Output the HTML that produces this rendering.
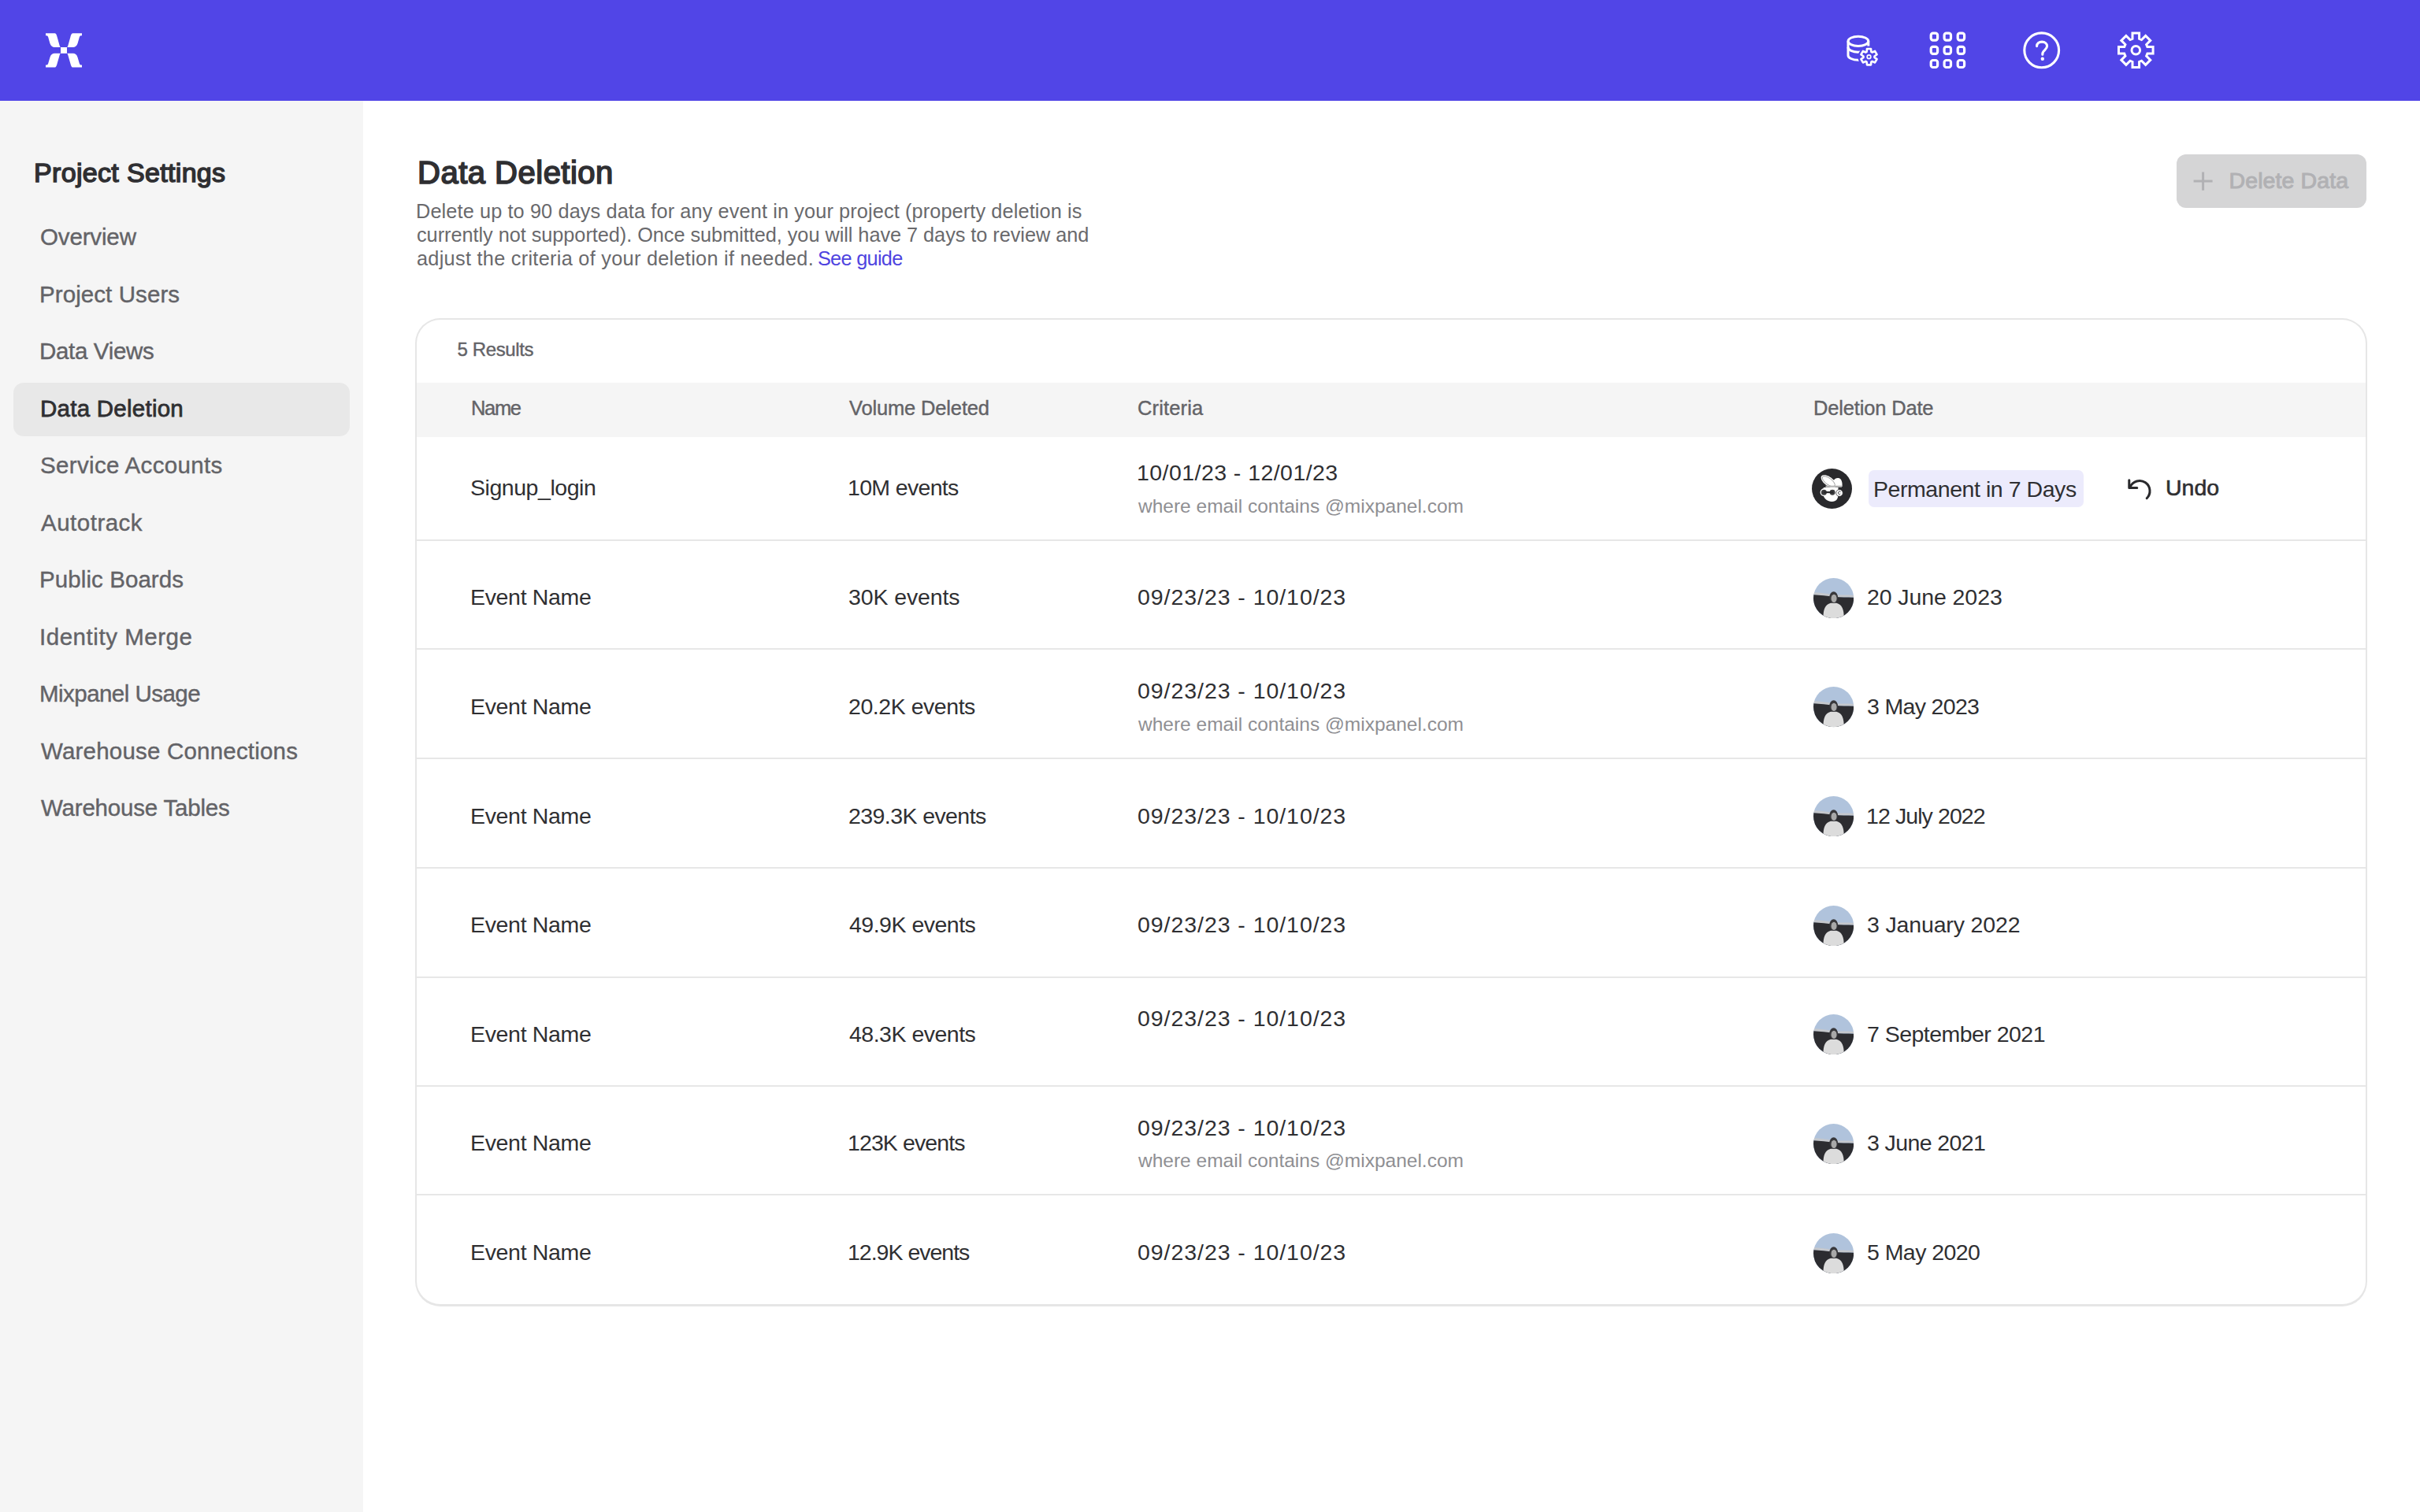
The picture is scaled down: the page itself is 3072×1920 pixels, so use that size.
<!DOCTYPE html>
<html><head><meta charset="utf-8"><title>Data Deletion</title>
<style>
html,body{margin:0;padding:0;}
body{width:3072px;height:1920px;overflow:hidden;position:relative;background:#fff;font-family:"Liberation Sans", sans-serif;}
.t{position:absolute;white-space:nowrap;}
.abs{position:absolute;}
</style></head><body>
<div class="abs" style="left:0;top:0;width:3072px;height:128px;background:#5145e7"></div>
<svg style="position:absolute;left:0;top:0" width="160" height="128" viewBox="0 0 160 128">
<g transform="translate(81,63.9)" fill="#fff">
<path d="M -23,-21.6 L -11.4,-21.6 C -9.6,-21.6 -8.9,-18.5 -8.4,-16.8 L -5.6,-7 C -5.1,-5.2 -4.6,-3.9 -4,-3.9 L -11.8,-3.9 C -14.2,-3.9 -16.6,-5.6 -17.6,-9 L -19.8,-16.6 C -20.3,-18.2 -21,-18.6 -22,-18.6 L -23,-18.6 Z"/><path d="M -23,-21.6 L -11.4,-21.6 C -9.6,-21.6 -8.9,-18.5 -8.4,-16.8 L -5.6,-7 C -5.1,-5.2 -4.6,-3.9 -4,-3.9 L -11.8,-3.9 C -14.2,-3.9 -16.6,-5.6 -17.6,-9 L -19.8,-16.6 C -20.3,-18.2 -21,-18.6 -22,-18.6 L -23,-18.6 Z" transform="scale(-1,1)"/><path d="M -23,-21.6 L -11.4,-21.6 C -9.6,-21.6 -8.9,-18.5 -8.4,-16.8 L -5.6,-7 C -5.1,-5.2 -4.6,-3.9 -4,-3.9 L -11.8,-3.9 C -14.2,-3.9 -16.6,-5.6 -17.6,-9 L -19.8,-16.6 C -20.3,-18.2 -21,-18.6 -22,-18.6 L -23,-18.6 Z" transform="scale(1,-1)"/><path d="M -23,-21.6 L -11.4,-21.6 C -9.6,-21.6 -8.9,-18.5 -8.4,-16.8 L -5.6,-7 C -5.1,-5.2 -4.6,-3.9 -4,-3.9 L -11.8,-3.9 C -14.2,-3.9 -16.6,-5.6 -17.6,-9 L -19.8,-16.6 C -20.3,-18.2 -21,-18.6 -22,-18.6 L -23,-18.6 Z" transform="scale(-1,-1)"/>
<rect x="-4" y="-3.9" width="8" height="7.8"/>
</g></svg>
<svg style="position:absolute;left:2300px;top:0" width="500" height="128" viewBox="2300 0 500 128">
<g fill="none" stroke="#fff" stroke-width="3">
<ellipse cx="2358.9" cy="52.3" rx="12.9" ry="6.1"/>
<path d="M2346,52.3 V70.2 A12.9,6.1 0 0 0 2371.8,70.2 V52.3"/>
<path d="M2346,60.1 A12.9,6.1 0 0 0 2371.8,60.1"/>
</g>
<path d="M2369.60,65.80 L2370.00,62.00 L2375.00,62.00 L2375.40,65.80 L2376.59,66.49 L2380.08,64.93 L2382.58,69.27 L2379.49,71.51 L2379.49,72.89 L2382.58,75.13 L2380.08,79.47 L2376.59,77.91 L2375.40,78.60 L2375.00,82.40 L2370.00,82.40 L2369.60,78.60 L2368.41,77.91 L2364.92,79.47 L2362.42,75.13 L2365.51,72.89 L2365.51,71.51 L2362.42,69.27 L2364.92,64.93 L2368.41,66.49 Z" fill="#5145e7" stroke="#5145e7" stroke-width="7" stroke-linejoin="round"/>
<path d="M2369.60,65.80 L2370.00,62.00 L2375.00,62.00 L2375.40,65.80 L2376.59,66.49 L2380.08,64.93 L2382.58,69.27 L2379.49,71.51 L2379.49,72.89 L2382.58,75.13 L2380.08,79.47 L2376.59,77.91 L2375.40,78.60 L2375.00,82.40 L2370.00,82.40 L2369.60,78.60 L2368.41,77.91 L2364.92,79.47 L2362.42,75.13 L2365.51,72.89 L2365.51,71.51 L2362.42,69.27 L2364.92,64.93 L2368.41,66.49 Z" fill="#5145e7" stroke="#fff" stroke-width="2.6" stroke-linejoin="round"/>
<circle cx="2372.5" cy="72.2" r="2.3" fill="none" stroke="#fff" stroke-width="1.7"/>
<g fill="none" stroke="#fff" stroke-width="3.2">
<rect x="2451.2" y="42.2" width="8.4" height="9" rx="2.6"/>
<rect x="2451.2" y="59.4" width="8.4" height="9" rx="2.6"/>
<rect x="2451.2" y="76.5" width="8.4" height="9" rx="2.6"/>
<rect x="2468.1" y="42.2" width="8.4" height="9" rx="2.6"/>
<rect x="2468.1" y="59.4" width="8.4" height="9" rx="2.6"/>
<rect x="2468.1" y="76.5" width="8.4" height="9" rx="2.6"/>
<rect x="2485.2" y="42.2" width="8.4" height="9" rx="2.6"/>
<rect x="2485.2" y="59.4" width="8.4" height="9" rx="2.6"/>
<rect x="2485.2" y="76.5" width="8.4" height="9" rx="2.6"/>
</g>
<circle cx="2591.7" cy="63.8" r="21.9" fill="none" stroke="#fff" stroke-width="3.1"/>
<path d="M2585.6,58.6 C2585.6,55 2588.5,53.1 2592.1,53.1 C2595.8,53.1 2598.6,55.3 2598.6,58.6 C2598.6,61.8 2595.6,63.2 2593.9,65.4 C2593.0,66.5 2592.8,67.8 2592.8,69.2" fill="none" stroke="#fff" stroke-width="3.1" stroke-linecap="round"/>
<circle cx="2592.8" cy="74.8" r="2.2" fill="#fff"/>
<path d="M2707.00,49.20 L2707.00,42.00 L2715.60,42.00 L2715.60,49.20 L2718.58,50.44 L2723.67,45.34 L2729.76,51.43 L2724.66,56.52 L2725.90,59.50 L2733.10,59.50 L2733.10,68.10 L2725.90,68.10 L2724.66,71.08 L2729.76,76.17 L2723.67,82.26 L2718.58,77.16 L2715.60,78.40 L2715.60,85.60 L2707.00,85.60 L2707.00,78.40 L2704.02,77.16 L2698.93,82.26 L2692.84,76.17 L2697.94,71.08 L2696.70,68.10 L2689.50,68.10 L2689.50,59.50 L2696.70,59.50 L2697.94,56.52 L2692.84,51.43 L2698.93,45.34 L2704.02,50.44 Z" fill="none" stroke="#fff" stroke-width="3" stroke-linejoin="miter"/>
<circle cx="2711.3" cy="63.8" r="5.3" fill="none" stroke="#fff" stroke-width="3"/>
</svg>
<div class="abs" style="left:0;top:128px;width:461px;height:1792px;background:#f5f5f5"></div>
<div class="abs" style="left:17px;top:486px;width:427px;height:68px;border-radius:13px;background:#e8e8e8"></div>
<div class="abs" style="left:2763px;top:196px;width:241px;height:68px;border-radius:12px;background:#d5d5d6"></div>
<svg class="abs" style="left:2780px;top:214px" width="32" height="32" viewBox="2780 214 32 32"><path d="M2796.6,218.4 V241.7 M2784.6,230 H2808.6" stroke="#b1b1b4" stroke-width="3"/></svg>
<div class="abs" style="left:527px;top:404px;width:2478px;height:1255px;box-sizing:border-box;border:2px solid #e6e6e6;border-bottom-width:3px;border-radius:32px;background:#fff"></div>
<div class="abs" style="left:529px;top:486px;width:2474px;height:68.5px;background:#f5f5f5"></div>
<div class="abs" style="left:529px;top:684.5px;width:2474px;height:2px;background:#e7e7e7"></div>
<div class="abs" style="left:529px;top:823.3px;width:2474px;height:2px;background:#e7e7e7"></div>
<div class="abs" style="left:529px;top:962.0px;width:2474px;height:2px;background:#e7e7e7"></div>
<div class="abs" style="left:529px;top:1100.6px;width:2474px;height:2px;background:#e7e7e7"></div>
<div class="abs" style="left:529px;top:1239.5px;width:2474px;height:2px;background:#e7e7e7"></div>
<div class="abs" style="left:529px;top:1378.0px;width:2474px;height:2px;background:#e7e7e7"></div>
<div class="abs" style="left:529px;top:1516.3px;width:2474px;height:2px;background:#e7e7e7"></div>
<div class="abs" style="left:2372.4px;top:597px;width:272.4px;height:46.6px;border-radius:7px;background:#ecebfc"></div>
<svg style="position:absolute;left:2299.90px;top:595.00px" width="51.0" height="51.0" viewBox="0 0 51 51">
<circle cx="25.5" cy="25.5" r="25.5" fill="#29292c"/>
<path d="M26.5,23 C25.5,16 29,11.5 33.5,12 C37.5,12.5 39,17 38.5,23 Z" fill="#fff"/>
<ellipse cx="21.3" cy="16.3" rx="11.3" ry="5.6" transform="rotate(37 21.3 16.3)" fill="#fff"/>
<ellipse cx="21.3" cy="16.3" rx="9.6" ry="4" transform="rotate(37 21.3 16.3)" fill="none" stroke="#9a9a9a" stroke-width="0.9"/>
<rect x="17.5" y="21.6" width="20.5" height="2.2" fill="#b8b8b8"/>
<path d="M13.5,28 C13.5,37 19,42 25.5,42 C31,42 33.5,38 33.5,33 L33.5,24 L15,24 Z" fill="#fff"/>
<circle cx="15.4" cy="30.2" r="4.2" fill="#3c3c3e" stroke="#fff" stroke-width="1.3"/>
<circle cx="26.1" cy="30.2" r="4.1" fill="#3c3c3e" stroke="#fff" stroke-width="1.3"/>
<rect x="15" y="29" width="12" height="2.2" fill="#29292c"/>
<circle cx="35" cy="31" r="4.3" fill="#fff" stroke="#29292c" stroke-width="0.7"/>
<path d="M36.5,29.5 C35,28.5 33.3,29.5 33.5,31.2 C33.7,32.8 35.5,33.2 36.3,32" fill="none" stroke="#29292c" stroke-width="0.9"/>
</svg>
<svg style="position:absolute;left:2301.80px;top:733.70px" width="51.2" height="51.2" viewBox="0 0 70 70">
<defs><clipPath id="ac0"><circle cx="35" cy="35" r="35"/></clipPath></defs>
<g clip-path="url(#ac0)">
<rect width="70" height="70" fill="#b0c3dc"/>
<path d="M0,25 C12,25 22,27 35,29 C48,30 58,29 70,30 L70,33 C58,33 45,33 35,33 C22,32 10,30 0,29 Z" fill="#c4c7cc"/>
<path d="M0,29 C12,29.5 24,31 35,32.5 C48,33.5 58,33.5 70,34 L70,70 L0,70 Z" fill="#2c2c30"/>
<path d="M17,70 C17,55 20,46 30,43.5 L40,43.5 C50,46 53,55 53,70 Z" fill="#dcdcdc"/>
<ellipse cx="35.1" cy="33.5" rx="7.4" ry="9.8" fill="#38383b"/>
<ellipse cx="35.6" cy="35.5" rx="4.8" ry="7" fill="#a8a8a8"/>
</g></svg>
<svg style="position:absolute;left:2301.80px;top:872.35px" width="51.2" height="51.2" viewBox="0 0 70 70">
<defs><clipPath id="ac1"><circle cx="35" cy="35" r="35"/></clipPath></defs>
<g clip-path="url(#ac1)">
<rect width="70" height="70" fill="#b0c3dc"/>
<path d="M0,25 C12,25 22,27 35,29 C48,30 58,29 70,30 L70,33 C58,33 45,33 35,33 C22,32 10,30 0,29 Z" fill="#c4c7cc"/>
<path d="M0,29 C12,29.5 24,31 35,32.5 C48,33.5 58,33.5 70,34 L70,70 L0,70 Z" fill="#2c2c30"/>
<path d="M17,70 C17,55 20,46 30,43.5 L40,43.5 C50,46 53,55 53,70 Z" fill="#dcdcdc"/>
<ellipse cx="35.1" cy="33.5" rx="7.4" ry="9.8" fill="#38383b"/>
<ellipse cx="35.6" cy="35.5" rx="4.8" ry="7" fill="#a8a8a8"/>
</g></svg>
<svg style="position:absolute;left:2301.80px;top:1011.00px" width="51.2" height="51.2" viewBox="0 0 70 70">
<defs><clipPath id="ac2"><circle cx="35" cy="35" r="35"/></clipPath></defs>
<g clip-path="url(#ac2)">
<rect width="70" height="70" fill="#b0c3dc"/>
<path d="M0,25 C12,25 22,27 35,29 C48,30 58,29 70,30 L70,33 C58,33 45,33 35,33 C22,32 10,30 0,29 Z" fill="#c4c7cc"/>
<path d="M0,29 C12,29.5 24,31 35,32.5 C48,33.5 58,33.5 70,34 L70,70 L0,70 Z" fill="#2c2c30"/>
<path d="M17,70 C17,55 20,46 30,43.5 L40,43.5 C50,46 53,55 53,70 Z" fill="#dcdcdc"/>
<ellipse cx="35.1" cy="33.5" rx="7.4" ry="9.8" fill="#38383b"/>
<ellipse cx="35.6" cy="35.5" rx="4.8" ry="7" fill="#a8a8a8"/>
</g></svg>
<svg style="position:absolute;left:2301.80px;top:1149.65px" width="51.2" height="51.2" viewBox="0 0 70 70">
<defs><clipPath id="ac3"><circle cx="35" cy="35" r="35"/></clipPath></defs>
<g clip-path="url(#ac3)">
<rect width="70" height="70" fill="#b0c3dc"/>
<path d="M0,25 C12,25 22,27 35,29 C48,30 58,29 70,30 L70,33 C58,33 45,33 35,33 C22,32 10,30 0,29 Z" fill="#c4c7cc"/>
<path d="M0,29 C12,29.5 24,31 35,32.5 C48,33.5 58,33.5 70,34 L70,70 L0,70 Z" fill="#2c2c30"/>
<path d="M17,70 C17,55 20,46 30,43.5 L40,43.5 C50,46 53,55 53,70 Z" fill="#dcdcdc"/>
<ellipse cx="35.1" cy="33.5" rx="7.4" ry="9.8" fill="#38383b"/>
<ellipse cx="35.6" cy="35.5" rx="4.8" ry="7" fill="#a8a8a8"/>
</g></svg>
<svg style="position:absolute;left:2301.80px;top:1288.30px" width="51.2" height="51.2" viewBox="0 0 70 70">
<defs><clipPath id="ac4"><circle cx="35" cy="35" r="35"/></clipPath></defs>
<g clip-path="url(#ac4)">
<rect width="70" height="70" fill="#b0c3dc"/>
<path d="M0,25 C12,25 22,27 35,29 C48,30 58,29 70,30 L70,33 C58,33 45,33 35,33 C22,32 10,30 0,29 Z" fill="#c4c7cc"/>
<path d="M0,29 C12,29.5 24,31 35,32.5 C48,33.5 58,33.5 70,34 L70,70 L0,70 Z" fill="#2c2c30"/>
<path d="M17,70 C17,55 20,46 30,43.5 L40,43.5 C50,46 53,55 53,70 Z" fill="#dcdcdc"/>
<ellipse cx="35.1" cy="33.5" rx="7.4" ry="9.8" fill="#38383b"/>
<ellipse cx="35.6" cy="35.5" rx="4.8" ry="7" fill="#a8a8a8"/>
</g></svg>
<svg style="position:absolute;left:2301.80px;top:1426.95px" width="51.2" height="51.2" viewBox="0 0 70 70">
<defs><clipPath id="ac5"><circle cx="35" cy="35" r="35"/></clipPath></defs>
<g clip-path="url(#ac5)">
<rect width="70" height="70" fill="#b0c3dc"/>
<path d="M0,25 C12,25 22,27 35,29 C48,30 58,29 70,30 L70,33 C58,33 45,33 35,33 C22,32 10,30 0,29 Z" fill="#c4c7cc"/>
<path d="M0,29 C12,29.5 24,31 35,32.5 C48,33.5 58,33.5 70,34 L70,70 L0,70 Z" fill="#2c2c30"/>
<path d="M17,70 C17,55 20,46 30,43.5 L40,43.5 C50,46 53,55 53,70 Z" fill="#dcdcdc"/>
<ellipse cx="35.1" cy="33.5" rx="7.4" ry="9.8" fill="#38383b"/>
<ellipse cx="35.6" cy="35.5" rx="4.8" ry="7" fill="#a8a8a8"/>
</g></svg>
<svg style="position:absolute;left:2301.80px;top:1565.60px" width="51.2" height="51.2" viewBox="0 0 70 70">
<defs><clipPath id="ac6"><circle cx="35" cy="35" r="35"/></clipPath></defs>
<g clip-path="url(#ac6)">
<rect width="70" height="70" fill="#b0c3dc"/>
<path d="M0,25 C12,25 22,27 35,29 C48,30 58,29 70,30 L70,33 C58,33 45,33 35,33 C22,32 10,30 0,29 Z" fill="#c4c7cc"/>
<path d="M0,29 C12,29.5 24,31 35,32.5 C48,33.5 58,33.5 70,34 L70,70 L0,70 Z" fill="#2c2c30"/>
<path d="M17,70 C17,55 20,46 30,43.5 L40,43.5 C50,46 53,55 53,70 Z" fill="#dcdcdc"/>
<ellipse cx="35.1" cy="33.5" rx="7.4" ry="9.8" fill="#38383b"/>
<ellipse cx="35.6" cy="35.5" rx="4.8" ry="7" fill="#a8a8a8"/>
</g></svg>
<svg class="abs" style="left:2690px;top:600px" width="50" height="40" viewBox="2690 600 50 40"><path d="M2702.8,609.8 V619.6 H2712.8" fill="none" stroke="#29292c" stroke-width="3" stroke-linecap="round" stroke-linejoin="round"/><path d="M2704.2,618.1 A13,13 0 1 1 2725.2,632.7" fill="none" stroke="#29292c" stroke-width="3" stroke-linecap="round"/></svg>
<div id="ps" class="t" style="left:43.00px;top:202.00px;font-size:34px;line-height:34px;font-weight:400;color:#2f2f32;letter-spacing:0.333px;-webkit-text-stroke:1.5px currentColor;">Project Settings</div>
<div id="sb0" class="t" style="left:51.00px;top:286.01px;font-size:29.5px;line-height:29.5px;font-weight:400;color:#636367;letter-spacing:-0.143px;-webkit-text-stroke:0.4px currentColor;">Overview</div>
<div id="sb1" class="t" style="left:50.00px;top:358.51px;font-size:29.5px;line-height:29.5px;font-weight:400;color:#636367;letter-spacing:0.084px;-webkit-text-stroke:0.4px currentColor;">Project Users</div>
<div id="sb2" class="t" style="left:50.00px;top:431.01px;font-size:29.5px;line-height:29.5px;font-weight:400;color:#636367;letter-spacing:-0.333px;-webkit-text-stroke:0.4px currentColor;">Data Views</div>
<div id="sb3" class="t" style="left:51.00px;top:504.01px;font-size:29.5px;line-height:29.5px;font-weight:400;color:#2f2f32;letter-spacing:0.250px;-webkit-text-stroke:0.8px currentColor;">Data Deletion</div>
<div id="sb4" class="t" style="left:51.00px;top:576.01px;font-size:29.5px;line-height:29.5px;font-weight:400;color:#636367;letter-spacing:0.333px;-webkit-text-stroke:0.4px currentColor;">Service Accounts</div>
<div id="sb5" class="t" style="left:52.00px;top:649.01px;font-size:29.5px;line-height:29.5px;font-weight:400;color:#636367;letter-spacing:0.500px;-webkit-text-stroke:0.4px currentColor;">Autotrack</div>
<div id="sb6" class="t" style="left:50.00px;top:721.01px;font-size:29.5px;line-height:29.5px;font-weight:400;color:#636367;letter-spacing:0.084px;-webkit-text-stroke:0.4px currentColor;">Public Boards</div>
<div id="sb7" class="t" style="left:50.00px;top:793.51px;font-size:29.5px;line-height:29.5px;font-weight:400;color:#636367;letter-spacing:0.538px;-webkit-text-stroke:0.4px currentColor;">Identity Merge</div>
<div id="sb8" class="t" style="left:50.00px;top:866.01px;font-size:29.5px;line-height:29.5px;font-weight:400;color:#636367;letter-spacing:-0.538px;-webkit-text-stroke:0.4px currentColor;">Mixpanel Usage</div>
<div id="sb9" class="t" style="left:52.00px;top:938.60px;font-size:29.5px;line-height:29.5px;font-weight:400;color:#636367;letter-spacing:0.200px;-webkit-text-stroke:0.4px currentColor;">Warehouse Connections</div>
<div id="sb10" class="t" style="left:52.00px;top:1011.01px;font-size:29.5px;line-height:29.5px;font-weight:400;color:#636367;letter-spacing:-0.200px;-webkit-text-stroke:0.4px currentColor;">Warehouse Tables</div>
<div id="title" class="t" style="left:530.00px;top:198.60px;font-size:40px;line-height:40px;font-weight:400;color:#2f2f32;letter-spacing:0.500px;-webkit-text-stroke:1.7px currentColor;">Data Deletion</div>
<div id="p1" class="t" style="left:528.00px;top:255.81px;font-size:25.3px;line-height:25.3px;font-weight:400;color:#69696c;letter-spacing:0.115px;">Delete up to 90 days data for any event in your project (property deletion is</div>
<div id="p2" class="t" style="left:529.00px;top:286.10px;font-size:25.3px;line-height:25.3px;font-weight:400;color:#69696c;letter-spacing:-0.040px;">currently not supported). Once submitted, you will have 7 days to review and</div>
<div id="p3" class="t" style="left:529.00px;top:315.90px;font-size:25.3px;line-height:25.3px;font-weight:400;color:#69696c;letter-spacing:0.282px;">adjust the criteria of your deletion if needed.</div>
<div id="p3b" class="t" style="left:1037.90px;top:315.90px;font-size:25.3px;line-height:25.3px;font-weight:400;color:#4f44e0;letter-spacing:-0.689px;">See guide</div>
<div id="btn" class="t" style="left:2829.50px;top:214.71px;font-size:28.5px;line-height:28.5px;font-weight:400;color:#b1b1b4;letter-spacing:0.100px;-webkit-text-stroke:1.0px currentColor;">Delete Data</div>
<div id="res" class="t" style="left:580.50px;top:432.01px;font-size:24px;line-height:24px;font-weight:400;color:#636367;letter-spacing:-0.375px;-webkit-text-stroke:0.4px currentColor;">5 Results</div>
<div id="h1" class="t" style="left:598.00px;top:505.50px;font-size:25.5px;line-height:25.5px;font-weight:400;color:#636367;letter-spacing:-1.333px;-webkit-text-stroke:0.4px currentColor;">Name</div>
<div id="h2" class="t" style="left:1078.00px;top:505.71px;font-size:25.5px;line-height:25.5px;font-weight:400;color:#636367;letter-spacing:-0.154px;-webkit-text-stroke:0.4px currentColor;">Volume Deleted</div>
<div id="h3" class="t" style="left:1444.00px;top:505.71px;font-size:25.5px;line-height:25.5px;font-weight:400;color:#636367;letter-spacing:0.143px;-webkit-text-stroke:0.4px currentColor;">Criteria</div>
<div id="h4" class="t" style="left:2302.00px;top:506.40px;font-size:25.5px;line-height:25.5px;font-weight:400;color:#636367;letter-spacing:-0.166px;-webkit-text-stroke:0.4px currentColor;">Deletion Date</div>
<div id="r1n" class="t" style="left:597.00px;top:604.91px;font-size:28.5px;line-height:28.5px;font-weight:400;color:#2f2f32;letter-spacing:-0.455px;">Signup_login</div>
<div id="r1v" class="t" style="left:1076.00px;top:605.31px;font-size:28.5px;line-height:28.5px;font-weight:400;color:#2f2f32;letter-spacing:-0.667px;">10M events</div>
<div id="r1c" class="t" style="left:1443.00px;top:586.01px;font-size:28.5px;line-height:28.5px;font-weight:400;color:#2f2f32;letter-spacing:0.444px;">10/01/23 - 12/01/23</div>
<div id="r1s" class="t" style="left:1445.00px;top:631.01px;font-size:24.5px;line-height:24.5px;font-weight:400;color:#8f8f93;letter-spacing:0.000px;">where email contains @mixpanel.com</div>
<div id="r1d" class="t" style="left:2378.00px;top:607.41px;font-size:28.5px;line-height:28.5px;font-weight:400;color:#2f2f32;letter-spacing:-0.444px;">Permanent in 7 Days</div>
<div id="undo" class="t" style="left:2749.00px;top:605.11px;font-size:28.5px;line-height:28.5px;font-weight:400;color:#2f2f32;letter-spacing:0.000px;-webkit-text-stroke:0.6px currentColor;">Undo</div>
<div id="r2n" class="t" style="left:597.00px;top:744.21px;font-size:28.5px;line-height:28.5px;font-weight:400;color:#2f2f32;letter-spacing:-0.333px;">Event Name</div>
<div id="r2v" class="t" style="left:1077.00px;top:744.21px;font-size:28.5px;line-height:28.5px;font-weight:400;color:#2f2f32;letter-spacing:-0.111px;">30K events</div>
<div id="r2c" class="t" style="left:1444.00px;top:744.21px;font-size:28.5px;line-height:28.5px;font-weight:400;color:#2f2f32;letter-spacing:0.944px;">09/23/23 - 10/10/23</div>
<div id="r2d" class="t" style="left:2370.00px;top:744.21px;font-size:28.5px;line-height:28.5px;font-weight:400;color:#2f2f32;letter-spacing:-0.091px;">20 June 2023</div>
<div id="r3n" class="t" style="left:597.00px;top:882.86px;font-size:28.5px;line-height:28.5px;font-weight:400;color:#2f2f32;letter-spacing:-0.333px;">Event Name</div>
<div id="r3v" class="t" style="left:1077.00px;top:882.86px;font-size:28.5px;line-height:28.5px;font-weight:400;color:#2f2f32;letter-spacing:-0.455px;">20.2K events</div>
<div id="r3c" class="t" style="left:1444.00px;top:863.26px;font-size:28.5px;line-height:28.5px;font-weight:400;color:#2f2f32;letter-spacing:0.944px;">09/23/23 - 10/10/23</div>
<div id="r3s" class="t" style="left:1445.00px;top:907.86px;font-size:24.5px;line-height:24.5px;font-weight:400;color:#8f8f93;letter-spacing:0.000px;">where email contains @mixpanel.com</div>
<div id="r3d" class="t" style="left:2370.00px;top:882.86px;font-size:28.5px;line-height:28.5px;font-weight:400;color:#2f2f32;letter-spacing:-0.667px;">3 May 2023</div>
<div id="r4n" class="t" style="left:597.00px;top:1021.51px;font-size:28.5px;line-height:28.5px;font-weight:400;color:#2f2f32;letter-spacing:-0.333px;">Event Name</div>
<div id="r4v" class="t" style="left:1077.00px;top:1021.51px;font-size:28.5px;line-height:28.5px;font-weight:400;color:#2f2f32;letter-spacing:-0.583px;">239.3K events</div>
<div id="r4c" class="t" style="left:1444.00px;top:1021.51px;font-size:28.5px;line-height:28.5px;font-weight:400;color:#2f2f32;letter-spacing:0.944px;">09/23/23 - 10/10/23</div>
<div id="r4d" class="t" style="left:2369.00px;top:1021.51px;font-size:28.5px;line-height:28.5px;font-weight:400;color:#2f2f32;letter-spacing:-0.909px;">12 July 2022</div>
<div id="r5n" class="t" style="left:597.00px;top:1160.16px;font-size:28.5px;line-height:28.5px;font-weight:400;color:#2f2f32;letter-spacing:-0.333px;">Event Name</div>
<div id="r5v" class="t" style="left:1078.00px;top:1160.16px;font-size:28.5px;line-height:28.5px;font-weight:400;color:#2f2f32;letter-spacing:-0.500px;">49.9K events</div>
<div id="r5c" class="t" style="left:1444.00px;top:1160.16px;font-size:28.5px;line-height:28.5px;font-weight:400;color:#2f2f32;letter-spacing:0.944px;">09/23/23 - 10/10/23</div>
<div id="r5d" class="t" style="left:2370.00px;top:1160.16px;font-size:28.5px;line-height:28.5px;font-weight:400;color:#2f2f32;letter-spacing:-0.154px;">3 January 2022</div>
<div id="r6n" class="t" style="left:597.00px;top:1298.81px;font-size:28.5px;line-height:28.5px;font-weight:400;color:#2f2f32;letter-spacing:-0.333px;">Event Name</div>
<div id="r6v" class="t" style="left:1078.00px;top:1298.81px;font-size:28.5px;line-height:28.5px;font-weight:400;color:#2f2f32;letter-spacing:-0.500px;">48.3K events</div>
<div id="r6c" class="t" style="left:1444.00px;top:1279.21px;font-size:28.5px;line-height:28.5px;font-weight:400;color:#2f2f32;letter-spacing:0.944px;">09/23/23 - 10/10/23</div>
<div id="r6d" class="t" style="left:2370.00px;top:1298.81px;font-size:28.5px;line-height:28.5px;font-weight:400;color:#2f2f32;letter-spacing:-0.533px;">7 September 2021</div>
<div id="r7n" class="t" style="left:597.00px;top:1437.46px;font-size:28.5px;line-height:28.5px;font-weight:400;color:#2f2f32;letter-spacing:-0.333px;">Event Name</div>
<div id="r7v" class="t" style="left:1076.00px;top:1437.46px;font-size:28.5px;line-height:28.5px;font-weight:400;color:#2f2f32;letter-spacing:-0.900px;">123K events</div>
<div id="r7c" class="t" style="left:1444.00px;top:1417.86px;font-size:28.5px;line-height:28.5px;font-weight:400;color:#2f2f32;letter-spacing:0.944px;">09/23/23 - 10/10/23</div>
<div id="r7s" class="t" style="left:1445.00px;top:1462.46px;font-size:24.5px;line-height:24.5px;font-weight:400;color:#8f8f93;letter-spacing:0.000px;">where email contains @mixpanel.com</div>
<div id="r7d" class="t" style="left:2370.00px;top:1437.46px;font-size:28.5px;line-height:28.5px;font-weight:400;color:#2f2f32;letter-spacing:-0.600px;">3 June 2021</div>
<div id="r8n" class="t" style="left:597.00px;top:1576.11px;font-size:28.5px;line-height:28.5px;font-weight:400;color:#2f2f32;letter-spacing:-0.333px;">Event Name</div>
<div id="r8v" class="t" style="left:1076.00px;top:1576.11px;font-size:28.5px;line-height:28.5px;font-weight:400;color:#2f2f32;letter-spacing:-1.000px;">12.9K events</div>
<div id="r8c" class="t" style="left:1444.00px;top:1576.11px;font-size:28.5px;line-height:28.5px;font-weight:400;color:#2f2f32;letter-spacing:0.944px;">09/23/23 - 10/10/23</div>
<div id="r8d" class="t" style="left:2370.00px;top:1576.11px;font-size:28.5px;line-height:28.5px;font-weight:400;color:#2f2f32;letter-spacing:-0.556px;">5 May 2020</div>
<script>(function(){var w=window.innerWidth;if(w&&Math.abs(w-3072)>2){document.documentElement.style.zoom=(w/3072);}})();</script>
</body></html>
